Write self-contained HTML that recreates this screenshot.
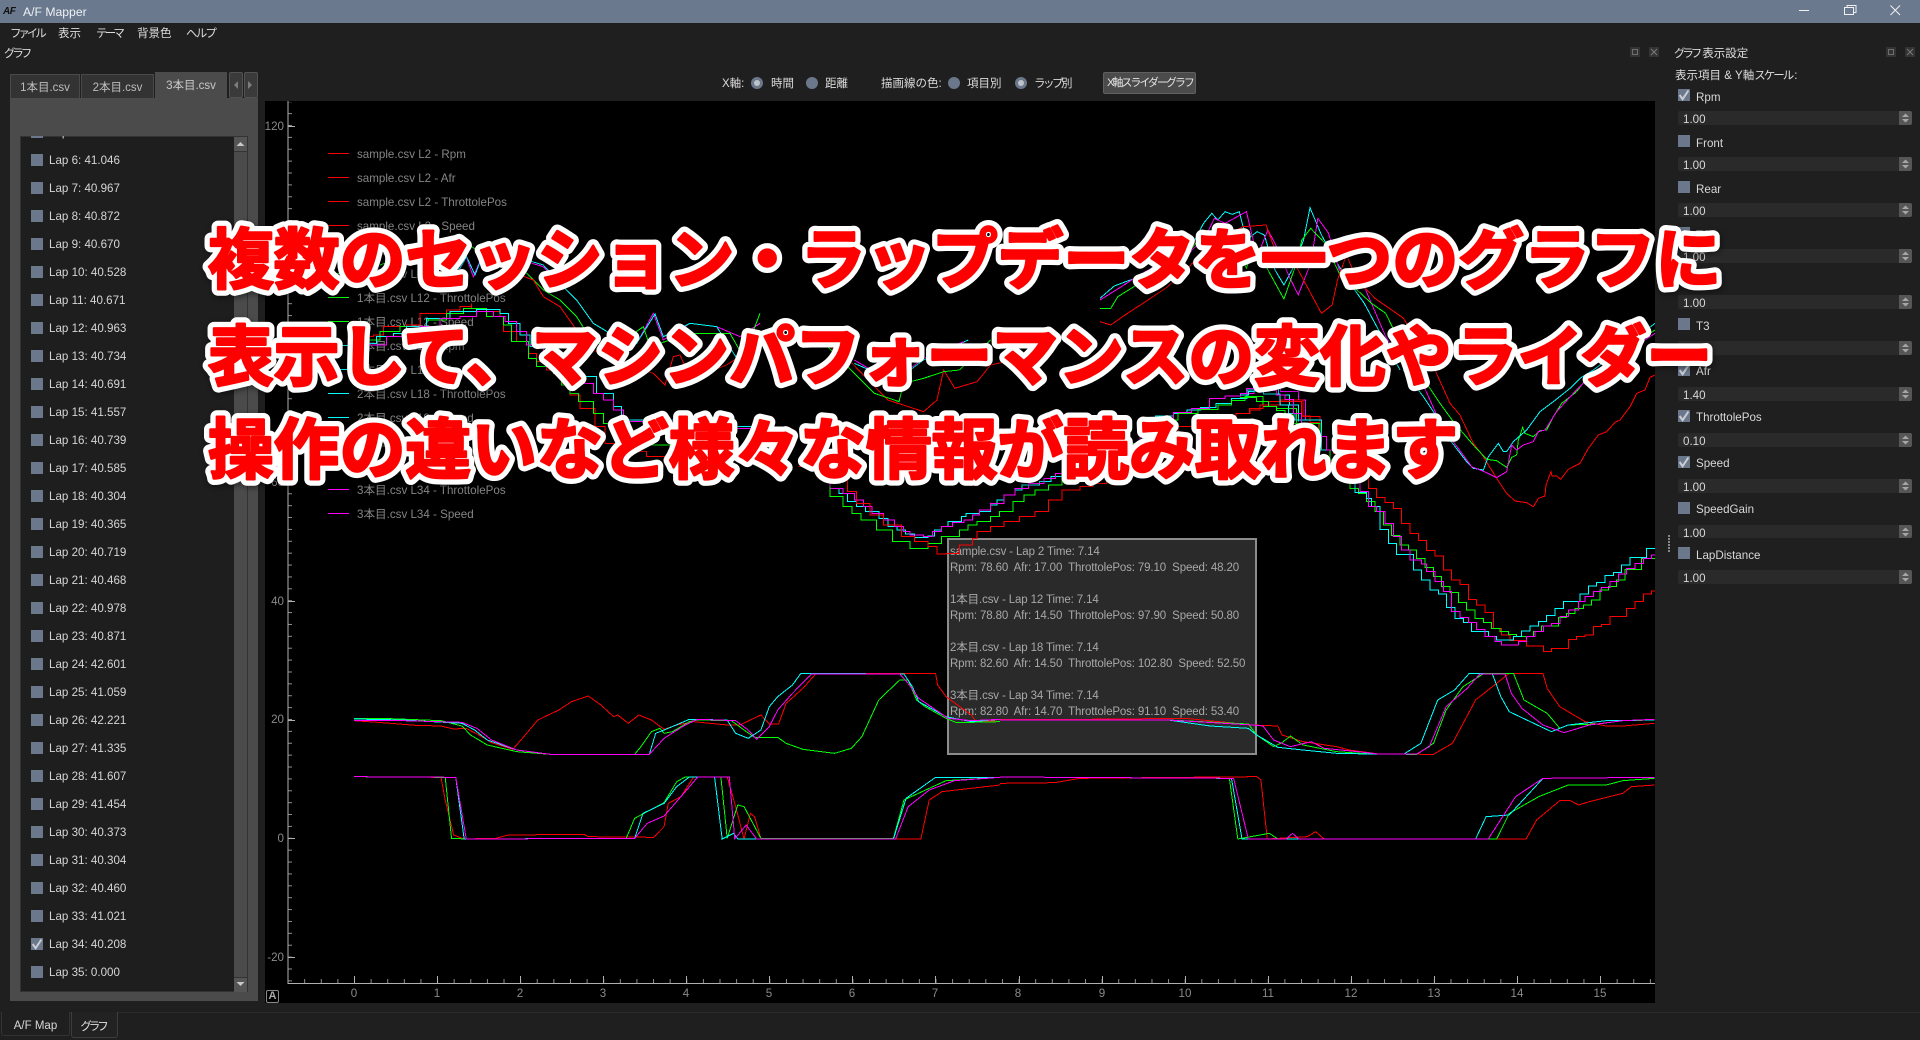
<!DOCTYPE html>
<html lang="ja">
<head>
<meta charset="utf-8">
<title>A/F Mapper</title>
<style>
html,body{margin:0;padding:0;width:1920px;height:1040px;overflow:hidden;background:#1f1f1f}
body{position:relative;font-family:"Liberation Sans","Noto Sans CJK JP",sans-serif;font-size:12px;color:#dcdcdc}
.a{position:absolute;white-space:pre;line-height:16px;margin-top:1px}
.k{letter-spacing:-3.1px}
#title{position:absolute;left:0;top:0;width:1920px;height:23px;background:#6a798e}
.cb{position:absolute;left:11px;width:12px;height:12px;background:#6b788c}
.cb svg{position:absolute;left:0;top:0}
.row{position:relative;height:28px}
.row .cb{top:8px}
.row span{position:absolute;left:29px;top:7px;line-height:16px;font-size:11.6px;color:#d6d6d6}
.tab{position:absolute;box-sizing:border-box;text-align:center;font-size:11.5px;line-height:26px;color:#bdbdbd}
.radio{position:absolute;width:12px;height:12px;border-radius:50%;background:#6b788c;top:77px}
.radio i{position:absolute;left:3px;top:3px;width:6px;height:6px;border-radius:50%;background:#bfc3ca}
.dk{position:absolute;width:10px;height:10px;background:#333;border:0;top:47px}
.dk svg{position:absolute;left:0;top:0}
.rc{position:absolute;left:1678px;width:12px;height:12px;background:#6b788c}
.rc svg{position:absolute;left:0;top:0}
.rl{position:absolute;left:1696px;line-height:16px;font-size:11.6px;color:#d8d8d8;white-space:pre;margin-top:1px}
.sp{position:absolute;left:1678px;width:234px;height:14px;background:#2a2a2a;border-radius:2px;overflow:hidden}
.sp span{position:absolute;left:5px;top:1px;line-height:15px;font-size:11.6px;color:#d8d8d8}
.sp b{position:absolute;left:221px;top:0;width:13px;height:14px;background:#565656}
.sp svg{position:absolute;left:221px;top:0}
#plotclip{position:absolute;left:0;top:0;width:1655px;height:1040px;overflow:hidden}
.lg{position:absolute;left:357px;font-size:11.6px;line-height:16px;color:#858585;white-space:pre;margin-top:1px}
.ll{position:absolute;left:328px;width:21px;height:1px}
.yl{position:absolute;left:250px;width:34px;text-align:right;font-size:11.6px;line-height:16px;color:#8a8a8a;margin-top:1px}
.xl{position:absolute;top:985px;width:30px;text-align:center;font-size:11.6px;line-height:16px;color:#8a8a8a;margin-top:1px}
.tt{position:absolute;left:950px;font-size:11.5px;letter-spacing:-.13px;line-height:16px;color:#a8a8a8;white-space:pre;margin-top:1px}
#traces path,#traces polyline{fill:none;stroke-width:1;vector-effect:non-scaling-stroke}
.r{stroke:#ff0000}.g{stroke:#00ff00}.c{stroke:#00ffff}.m{stroke:#ff00ff}
#big{position:absolute;left:0;top:0;pointer-events:none}
#big text{font-family:"Liberation Sans","Noto Sans CJK JP",sans-serif;font-weight:700;font-size:65.8px;stroke-linejoin:round;stroke-linecap:round}
#big .w{fill:#fff;stroke:#fff;stroke-width:13px}
#big .f{fill:#ff0000;stroke:#ff0000;stroke-width:2.5px}
#big .wg{filter:drop-shadow(1px 2px 3px rgba(0,0,0,.45))}
</style>
</head>
<body>
<svg width="0" height="0" style="position:absolute"><defs>
<symbol id="chk" viewBox="0 0 12 12"><polyline points="1.7,6 4.6,10.2 10.4,1.5" fill="none" stroke="#c9cdd3" stroke-width="2"/></symbol>
<symbol id="spn" viewBox="0 0 13 14"><path d="M6.5 2.5L10 6H3zM6.5 11.5L10 8H3z" fill="#a6a6a6"/></symbol>
<symbol id="dki" viewBox="0 0 10 10"><rect x="2.5" y="2.5" width="5" height="5" fill="none" stroke="#6e6e6e"/></symbol>
<symbol id="dkx" viewBox="0 0 10 10"><path d="M2 2L8 8M8 2L2 8" stroke="#7a7a7a" fill="none"/></symbol>
</defs></svg>

<div id="title"></div>
<div class="a" style="left:3px;top:3px;font-size:10px;font-style:italic;font-weight:bold;color:#111;letter-spacing:-.5px">AF</div>
<div class="a" style="left:23px;top:3px;font-size:12.2px;color:#eef0f3">A/F Mapper</div>
<svg style="position:absolute;left:1790px;top:0" width="130" height="23" fill="none" stroke="#f0f0f0" stroke-width="1">
<path d="M9 10.5H19"/><path d="M54.5 7.5H63.5V14.5H54.5zM57 7.5V5.5H66V12.5H63.5"/><path d="M100.5 5.5L110 15M110 5.5L100.5 15"/></svg>

<div class="a k" style="left:10px;top:25px;font-size:11.5px">ファイル</div>
<div class="a" style="left:58px;top:25px;font-size:11.5px">表示</div>
<div class="a" style="left:96px;top:25px;font-size:11.5px;letter-spacing:-2.8px">テーマ</div>
<div class="a" style="left:137px;top:25px;font-size:11.5px">背景色</div>
<div class="a" style="left:186px;top:25px;font-size:11.5px;letter-spacing:-1.8px">ヘルプ</div>
<div class="a k" style="left:4px;top:45px;font-size:11.5px">グラフ</div>

<div class="dk" style="left:1630px"><svg width="10" height="10"><use href="#dki"/></svg></div>
<div class="dk" style="left:1649px"><svg width="10" height="10"><use href="#dkx"/></svg></div>
<div class="dk" style="left:1886px"><svg width="10" height="10"><use href="#dki"/></svg></div>
<div class="dk" style="left:1905px"><svg width="10" height="10"><use href="#dkx"/></svg></div>

<!-- tabs -->
<div class="tab" style="left:10px;top:74px;width:70px;height:24px;background:#333;border:1px solid #4a4a4a;border-bottom:0">1本目.csv</div>
<div class="tab" style="left:81px;top:74px;width:73px;height:24px;background:#333;border:1px solid #4a4a4a;border-bottom:0">2本目.csv</div>
<div class="tab" style="left:155px;top:72px;width:72px;height:27px;background:#4b4b4b;color:#c8c8c8;line-height:29px">3本目.csv</div>
<div style="position:absolute;left:229px;top:72px;width:14px;height:26px;background:#3a3a3a;box-sizing:border-box;border:1px solid #525252;border-radius:2px"></div>
<div style="position:absolute;left:244px;top:72px;width:14px;height:26px;background:#3a3a3a;box-sizing:border-box;border:1px solid #525252;border-radius:2px"></div>
<svg style="position:absolute;left:229px;top:72px" width="29" height="26"><path d="M5 13L9 9V17zM23 13L19 9V17z" fill="#7d7d7d"/></svg>

<!-- left pane -->
<div style="position:absolute;left:10px;top:98px;width:248px;height:903px;background:#4b4b4b"></div>
<div style="position:absolute;left:20px;top:136px;width:228px;height:856px;background:#1e1e1e;overflow:hidden;box-shadow:inset 0 0 0 1px #333">
<div style="position:absolute;left:0;top:-18px;width:214px">
<div class="row"><div class="cb"></div><span>Lap 5: 41.288</span></div>
<div class="row"><div class="cb"></div><span>Lap 6: 41.046</span></div>
<div class="row"><div class="cb"></div><span>Lap 7: 40.967</span></div>
<div class="row"><div class="cb"></div><span>Lap 8: 40.872</span></div>
<div class="row"><div class="cb"></div><span>Lap 9: 40.670</span></div>
<div class="row"><div class="cb"></div><span>Lap 10: 40.528</span></div>
<div class="row"><div class="cb"></div><span>Lap 11: 40.671</span></div>
<div class="row"><div class="cb"></div><span>Lap 12: 40.963</span></div>
<div class="row"><div class="cb"></div><span>Lap 13: 40.734</span></div>
<div class="row"><div class="cb"></div><span>Lap 14: 40.691</span></div>
<div class="row"><div class="cb"></div><span>Lap 15: 41.557</span></div>
<div class="row"><div class="cb"></div><span>Lap 16: 40.739</span></div>
<div class="row"><div class="cb"></div><span>Lap 17: 40.585</span></div>
<div class="row"><div class="cb"></div><span>Lap 18: 40.304</span></div>
<div class="row"><div class="cb"></div><span>Lap 19: 40.365</span></div>
<div class="row"><div class="cb"></div><span>Lap 20: 40.719</span></div>
<div class="row"><div class="cb"></div><span>Lap 21: 40.468</span></div>
<div class="row"><div class="cb"></div><span>Lap 22: 40.978</span></div>
<div class="row"><div class="cb"></div><span>Lap 23: 40.871</span></div>
<div class="row"><div class="cb"></div><span>Lap 24: 42.601</span></div>
<div class="row"><div class="cb"></div><span>Lap 25: 41.059</span></div>
<div class="row"><div class="cb"></div><span>Lap 26: 42.221</span></div>
<div class="row"><div class="cb"></div><span>Lap 27: 41.335</span></div>
<div class="row"><div class="cb"></div><span>Lap 28: 41.607</span></div>
<div class="row"><div class="cb"></div><span>Lap 29: 41.454</span></div>
<div class="row"><div class="cb"></div><span>Lap 30: 40.373</span></div>
<div class="row"><div class="cb"></div><span>Lap 31: 40.304</span></div>
<div class="row"><div class="cb"></div><span>Lap 32: 40.460</span></div>
<div class="row"><div class="cb"></div><span>Lap 33: 41.021</span></div>
<div class="row"><div class="cb"><svg width="12" height="12"><use href="#chk"/></svg></div><span>Lap 34: 40.208</span></div>
<div class="row"><div class="cb"></div><span>Lap 35: 0.000</span></div>
</div>
<div style="position:absolute;left:214px;top:1px;width:13px;height:854px;background:#4b4b4b"></div>
<div style="position:absolute;left:214px;top:1px;width:13px;height:14px;background:#555;border-bottom:1px solid #333"></div>
<div style="position:absolute;left:214px;top:841px;width:13px;height:14px;background:#555;border-top:1px solid #333"></div>
<svg style="position:absolute;left:214px;top:1px" width="13" height="854"><path d="M6.5 5L10.5 9H2.5zM6.5 849L10.5 845H2.5z" fill="#c8c8c8"/></svg>
</div>

<!-- top control bar -->
<div class="a" style="left:722px;top:75px;font-size:11.5px">X軸:</div>
<div class="radio" style="left:751px"><i></i></div>
<div class="a" style="left:771px;top:75px;font-size:11.5px">時間</div>
<div class="radio" style="left:806px"></div>
<div class="a" style="left:825px;top:75px;font-size:11.5px">距離</div>
<div class="a" style="left:881px;top:75px;font-size:11.5px">描画線の色:</div>
<div class="radio" style="left:948px"></div>
<div class="a" style="left:967px;top:75px;font-size:11.5px">項目別</div>
<div class="radio" style="left:1015px"><i></i></div>
<div class="a" style="left:1034px;top:75px;font-size:11.5px;letter-spacing:-2.5px">ラップ別</div>
<div style="position:absolute;left:1103px;top:72px;width:93px;height:22px;box-sizing:border-box;background:#4b4b4b;border:1px solid #606060;border-radius:2px;color:#e4e4e4;font-size:11px;line-height:21px;white-space:pre;letter-spacing:-2px;padding-left:3px;overflow:hidden">X軸スライダーグラフ</div>

<!-- plot -->
<div id="plotclip">
<div style="position:absolute;left:265px;top:101px;width:1390px;height:902px;background:#000"></div>
<svg style="position:absolute;left:0;top:0" width="1655" height="1040" shape-rendering="crispEdges">
<defs>
<pattern id="ym" x="288" y="6.2" width="10" height="11.88" patternUnits="userSpaceOnUse"><rect x="0" y="0" width="4" height="1" fill="#8f8f8f"/></pattern>
<pattern id="xm" x="354" y="979" width="16.614" height="5" patternUnits="userSpaceOnUse"><rect x="0" y="0" width="1" height="4" fill="#8f8f8f"/></pattern>
</defs>
<rect x="288" y="102" width="4" height="881" fill="url(#ym)"/>
<rect x="288" y="979" width="1367" height="4" fill="url(#xm)"/>
<path d="M288 101V983.5H1655" fill="none" stroke="#b0b0b0"/>
<path d="M288 126.5H295M288 245.5H295M288 363.5H295M288 482.5H295M288 601.5H295M288 720.5H295M288 838.5H295M288 957.5H295" stroke="#b0b0b0" fill="none"/>
<path d="M354.5 983V976M437.5 983V976M520.5 983V976M603.5 983V976M686.5 983V976M769.5 983V976M852.5 983V976M935.5 983V976M1019.5 983V976M1102.5 983V976M1185.5 983V976M1268.5 983V976M1351.5 983V976M1434.5 983V976M1517.5 983V976M1600.5 983V976" stroke="#b0b0b0" fill="none"/>
</svg>
<div class="yl" style="top:118px">120</div>
<div class="yl" style="top:236px">100</div>
<div class="yl" style="top:355px">80</div>
<div class="yl" style="top:474px">60</div>
<div class="yl" style="top:593px">40</div>
<div class="yl" style="top:711px">20</div>
<div class="yl" style="top:830px">0</div>
<div class="yl" style="top:949px">-20</div>
<div class="xl" style="left:339px">0</div><div class="xl" style="left:422px">1</div><div class="xl" style="left:505px">2</div><div class="xl" style="left:588px">3</div><div class="xl" style="left:671px">4</div><div class="xl" style="left:754px">5</div><div class="xl" style="left:837px">6</div><div class="xl" style="left:920px">7</div><div class="xl" style="left:1003px">8</div><div class="xl" style="left:1087px">9</div><div class="xl" style="left:1170px">10</div><div class="xl" style="left:1253px">11</div><div class="xl" style="left:1336px">12</div><div class="xl" style="left:1419px">13</div><div class="xl" style="left:1502px">14</div><div class="xl" style="left:1585px">15</div>

<div style="position:absolute;left:266px;top:990px;width:13px;height:13px;box-sizing:border-box;border:1px solid #8a8a8a;border-radius:2px;font-size:11px;font-weight:bold;line-height:11px;text-align:center;color:#aaa">A</div>

<!-- legend -->
<div class="ll" style="top:153px;background:#f00"></div><div class="lg" style="top:146px">sample.csv L2 - Rpm</div>
<div class="ll" style="top:177px;background:#f00"></div><div class="lg" style="top:170px">sample.csv L2 - Afr</div>
<div class="ll" style="top:201px;background:#f00"></div><div class="lg" style="top:194px">sample.csv L2 - ThrottolePos</div>
<div class="ll" style="top:225px;background:#f00"></div><div class="lg" style="top:218px">sample.csv L2 - Speed</div>
<div class="ll" style="top:249px;background:#0f0"></div><div class="lg" style="top:242px">1本目.csv L12 - Rpm</div>
<div class="ll" style="top:273px;background:#0f0"></div><div class="lg" style="top:266px">1本目.csv L12 - Afr</div>
<div class="ll" style="top:297px;background:#0f0"></div><div class="lg" style="top:290px">1本目.csv L12 - ThrottolePos</div>
<div class="ll" style="top:321px;background:#0f0"></div><div class="lg" style="top:314px">1本目.csv L12 - Speed</div>
<div class="ll" style="top:345px;background:#0ff"></div><div class="lg" style="top:338px">2本目.csv L18 - Rpm</div>
<div class="ll" style="top:369px;background:#0ff"></div><div class="lg" style="top:362px">2本目.csv L18 - Afr</div>
<div class="ll" style="top:393px;background:#0ff"></div><div class="lg" style="top:386px">2本目.csv L18 - ThrottolePos</div>
<div class="ll" style="top:417px;background:#0ff"></div><div class="lg" style="top:410px">2本目.csv L18 - Speed</div>
<div class="ll" style="top:441px;background:#f0f"></div><div class="lg" style="top:434px">3本目.csv L34 - Rpm</div>
<div class="ll" style="top:465px;background:#f0f"></div><div class="lg" style="top:458px">3本目.csv L34 - Afr</div>
<div class="ll" style="top:489px;background:#f0f"></div><div class="lg" style="top:482px">3本目.csv L34 - ThrottolePos</div>
<div class="ll" style="top:513px;background:#f0f"></div><div class="lg" style="top:506px">3本目.csv L34 - Speed</div>

<!-- tooltip -->
<div style="position:absolute;left:947px;top:538px;width:310px;height:217px;box-sizing:border-box;background:#2a2a2a;border:2px solid #8c8c8c"></div>
<div class="tt" style="top:543px">sample.csv - Lap 2 Time: 7.14</div>
<div class="tt" style="top:559px">Rpm: 78.60  Afr: 17.00  ThrottolePos: 79.10  Speed: 48.20</div>
<div class="tt" style="top:591px">1本目.csv - Lap 12 Time: 7.14</div>
<div class="tt" style="top:607px">Rpm: 78.80  Afr: 14.50  ThrottolePos: 97.90  Speed: 50.80</div>
<div class="tt" style="top:639px">2本目.csv - Lap 18 Time: 7.14</div>
<div class="tt" style="top:655px">Rpm: 82.60  Afr: 14.50  ThrottolePos: 102.80  Speed: 52.50</div>
<div class="tt" style="top:687px">3本目.csv - Lap 34 Time: 7.14</div>
<div class="tt" style="top:703px">Rpm: 82.80  Afr: 14.70  ThrottolePos: 91.10  Speed: 53.40</div>

<!-- traces -->
<svg id="traces" style="position:absolute;left:0;top:0" width="1655" height="1040" shape-rendering="crispEdges">
<g transform="translate(340,650) scale(.42088,.33333)">
<polyline class="r" points="33,212 100,218 180,226 240,228 270,237 300,235 330,255 360,278 410,298 430,270 470,210 520,180 550,155 590,138 620,165 650,200 660,195 685,220 710,195 740,210 770,238 800,225 840,215 880,220 920,225 950,225 1000,195 1020,222 1042,222 1060,160 1100,115 1130,72 1415,70 1420,105 1440,140 1500,195 1510,212 1568,214"/>
<polyline class="g" points="33,205 100,205 240,212 290,228 310,255 350,285 420,305 500,313 700,313 715,290 740,245 760,235 770,250 790,245 830,215 850,210 930,212 960,240 985,262 1040,262 1060,280 1100,298 1175,310 1215,295 1240,260 1280,150 1330,90 1350,90 1370,150 1390,170 1440,205 1465,218 1568,215"/>
<polyline class="c" points="33,207 150,210 290,220 320,240 350,270 420,300 500,313 735,313 750,250 780,235 830,208 920,210 940,250 970,265 1000,240 1020,170 1040,140 1075,105 1095,70 1340,72 1360,110 1375,155 1440,200 1500,215 1568,208"/>
<polyline class="m" points="33,212 150,212 290,217 325,235 360,270 420,300 500,313 735,313 770,265 820,225 850,208 940,212 970,240 990,268 1020,230 1040,180 1075,130 1110,85 1120,72 1330,72 1350,100 1375,145 1445,205 1500,212 1568,208"/>
<polyline class="r" points="33,380 240,382 250,450 270,555 295,567 370,565 400,555 580,553 590,560 745,562 770,530 780,460 810,440 840,381 920,381 940,470 960,567 975,490 985,500 1000,565 1380,567 1400,450 1430,425 1568,405"/>
<polyline class="g" points="33,380 250,382 265,565 300,567 680,565 700,505 770,458 800,395 820,381 905,381 920,565 945,465 960,470 1000,565 1315,565 1340,450 1400,415 1440,392 1568,382"/>
<polyline class="c" points="33,380 275,382 295,567 700,565 720,490 770,460 800,410 830,381 890,381 908,567 935,550 945,567 1315,567 1345,445 1415,382 1568,382"/>
<polyline class="m" points="33,380 275,382 300,567 700,565 730,520 770,498 810,440 850,381 925,381 938,567 965,525 990,567 1320,567 1350,470 1400,420 1460,392 1568,382"/>
</g>
<g transform="translate(1000,650) scale(.42088,.33333)">
<polyline class="r" points="0,208 200,208 440,205 600,225 660,228 670,255 720,275 800,290 830,300 900,312 1030,313 1075,280 1130,150 1190,90 1210,70 1290,70 1300,115 1330,170 1390,215 1440,228 1480,228 1555,220"/>
<polyline class="g" points="0,210 400,210 590,222 610,255 650,290 670,278 690,258 720,285 800,305 880,312 990,313 1030,280 1060,180 1100,110 1150,70 1220,70 1245,150 1300,190 1330,235 1350,225 1420,222 1480,212 1555,210"/>
<polyline class="c" points="0,210 400,210 500,228 590,235 610,255 660,292 720,300 800,310 880,312 960,312 1000,280 1040,150 1080,120 1115,70 1170,72 1190,140 1210,185 1260,215 1310,245 1350,225 1440,212 1555,210"/>
<polyline class="m" points="0,210 400,210 600,225 625,228 650,270 690,290 740,275 770,295 850,305 900,312 990,312 1020,290 1060,170 1110,115 1140,72 1200,72 1215,130 1240,175 1290,225 1340,248 1400,225 1480,212 1555,208"/>
<polyline class="r" points="0,400 130,398 190,385 610,380 620,390 635,567 730,560 750,545 770,567 1250,567 1275,510 1330,452 1355,452 1375,465 1400,455 1480,430 1500,410 1555,405"/>
<polyline class="g" points="0,381 545,385 565,567 640,550 660,567 1180,567 1210,490 1280,440 1350,405 1440,405 1480,392 1555,385"/>
<polyline class="c" points="0,381 550,385 575,567 1130,567 1155,500 1210,495 1250,440 1290,385 1555,382"/>
<polyline class="m" points="0,381 555,385 590,567 680,567 695,550 710,567 1160,567 1225,440 1290,385 1555,382"/>
</g>
<g transform="translate(260,110) scale(.33333)">
<path class="r" d="M290 680H340V675H370V650H440V645H480V610H560V600H600V590H635V580V595H680V605H720V620H730V665H770V695H805V730H830V755H860V780H905V820H930V855H960V895H1005V950H1035V1000H1100V1025H1160V1040H1215V1060H1240V1080H1300V1100"/>
<path class="g" d="M310 690H360V665H420V650H500V630H560V610H610V595H680V620H730V645H755V695H805V745H830V770H880V790H905V825H930V850H955V875H1000V910H1030V940H1085V965H1135V1005H1230V1010"/>
<path class="c" d="M320 700H350V680H400V670H440V650H500V625H570V605H650V598H720V610H745V640H780V675H810V710H860V745H910V770H950V800H1010V850H1060V890H1085V930H1250V940H1400V950H1500"/>
<path class="m" d="M320 705H380V680H430V665H480V650H540V625H600V620H650V605H700V620H735V635H770V665H800V705H850V740H890V760H910V795H960V820H1000V850H1030V870H1060V900H1090V935H1250V955H1500"/>
<polyline class="m" points="380,460 460,440 560,470 600,470 615,430 640,500 670,430 700,450 800,455 850,470 900,520 950,570 1000,640 1050,670 1130,700 1180,610 1210,690 1290,640 1370,650 1440,680 1500,640"/>
<polyline class="c" points="380,465 460,445 560,475 600,475 620,440 645,495 670,430 700,450 800,450 850,465 900,520 950,570 1000,640 1050,670 1130,700 1185,612 1210,680 1290,640 1370,650 1440,760"/>
<polyline class="g" points="360,465 430,440 590,480 620,400 650,420 800,490 850,540 900,570 950,620 1000,700 1080,700 1150,650 1170,710 1290,670 1410,670 1450,740 1500,610"/>
<polyline class="r" points="780,495 820,510 850,560 900,590 950,660 1000,720 1050,750 1180,790 1215,825 1240,740 1260,735 1285,790 1310,800 1400,765 1500,700"/>
</g>
<g transform="translate(620,330) scale(.44643,.33333)">
<polyline class="r" points="450,30 520,100 600,210 680,245 710,210 725,120 750,175 800,155 830,105 900,85 960,40"/>
<polyline class="g" points="450,30 510,110 570,190 625,215 635,160 680,145 725,125 760,120 830,30"/>
<polyline class="c" points="525,100 610,150 650,120 680,90 780,30"/>
<polyline class="m" points="525,90 600,150 650,115 680,85 770,35"/>
<path class="c" d="M470 460V475H490V490H510V515H530V530H550V545H580V565H600V590H620V600H640V612H660V622H690V618H705V600H720V590H735V575H765V560H775V550H805V545H830V525H845V510H860V495H885V480H900V465H940V455H965V440H990V420H1020V405H1050V390H1080V375H1110V360H1140V340H1170V300H1200V258H1240V250H1270V240H1300V232H1335V220H1370V205H1405V180H1440V175H1475V195H1500V225H1520V275"/>
<path class="m" d="M470 450V475H500V490H525V510H545V530H565V550H590V570H615V590H635V605H650V615H680V620H700V605H720V590H745V578H770V570H790V555H805V540H830V520H860V495H885V475H915V460H950V445H975V430H995V415H1030V400H1060V385H1100V365H1130V340H1165V310H1200V270H1240V248H1280V235H1320V205H1355V198H1390V190H1420V170H1445V168H1480V185H1520V210H1535V270"/>
<path class="g" d="M470 470V500H500V530H520V550H540V570H575V600H610V635H650V655H690V640H720V620H760V600H780V585H800V575H830V560H850V545H880V515H905V495H930V480H960V465H990V440H1030V425H1060V420H1100V380H1140V340H1170V300H1205V270H1250V250H1295V238H1340V225H1370V212H1400V200H1440V230H1470V235H1515V290"/>
<path class="r" d="M400 410H450V430H490V450H510V485H530V520H560V555H590V585H630V620H660V635H690V650H710V672H730V670H760V645H790V625H800V605H830V590H860V575H895V560H930V545H960V510H990V480H1030V470H1060V460H1090V430H1120V400H1150V375H1180V350H1215V320H1250V290H1300V275H1340V262H1380V250H1410V235H1440V225H1480V210H1530V260H1568V285"/>
</g>
<g transform="translate(1100,180) scale(.35714,.33333)">
<polyline class="c" points="0,355 40,318 110,290 170,245 240,215 260,190 290,130 313,100 330,120 350,95 370,103 390,95 410,180 440,155 460,165 490,270 515,315 540,265 570,180 588,83 620,165 670,260 700,310 740,370 800,490 840,570"/>
<polyline class="m" points="0,360 60,320 110,285 170,250 250,220 300,160 320,115 350,130 410,95 440,230 470,150 490,190 530,290 555,345 590,250 610,115 640,160 670,270 740,320 800,470 860,570 900,615"/>
<polyline class="g" points="0,385 30,385 50,350 110,310 170,255 250,215 290,160 370,160 410,265 430,200 460,250 515,357 550,250 565,180 590,145 630,190 670,280 760,370 800,400 850,510 920,610"/>
<polyline class="r" points="0,425 30,435 70,405 120,370 190,320 250,260 300,200 400,140 465,135 500,240 550,260 580,320 620,400 650,375 665,300 690,225 720,300 770,355 850,415 930,560"/>
</g>
<g transform="translate(1240,370) scale(.33333)">
<path class="r" d="M0 130H30V120H60V105H85V95H185V138H210V158H235V200H260V240H280V250H330V300H385V355H410V382H435V398H460V415H485V460H510V490H535V512H560V542H585V558H610V600H635V630H660V643H685V688H710V705H735V728H760V775H785V795H810V812H860V828H910V845H935V835H985V808H1010V800H1035V795H1060V770H1085V763H1110V740H1160V715H1185V695H1210V672H1235V663H1245"/>
<path class="g" d="M0 82H50V95H85V110H110V122H135V135H160V160H240V240H270V270H330V355H355V370H380V395H405V425H430V465H455V497H480V525H505V540H530V565H555V592H580V620H605V650H630V667H655V697H680V720H705V745H730V757H755V775H780V785H805V793H830V800H880V785H905V768H955V742H980V730H1005V715H1030V705H1055V690H1080V660H1105V650H1130V630H1155V598H1205V565H1245"/>
<path class="c" d="M0 75H25V65H45V58H70V72H120V105H145V130H165V150H245V240H345V368H380V385H395V410H420V478H445V520H470V553H520V600H545V630H570V660H595V672H620V712H645V745H670V757H695V785H745V800H770V810H820V800H845V783H870V768H895V755H920V737H945V715H970V695H1020V672H1045V648H1070V638H1095V617H1120V608H1145V585H1170V562H1220V535H1245"/>
<path class="m" d="M0 70H20V55H40V50H85V62H110V75H135V88H160V130H185V200H260V240H345V338H360V365H385V410H410V425H435V460H460V500H485V540H510V570H545V582H560V605H585V635H610V665H635V725H660V742H685V758H710V778H735V800H765V815H785V825H835V815H860V800H885V785H910V768H935V760H960V740H985V720H1015V695H1035V680H1060V665H1085V652H1110V635H1135V612H1160V595H1185V580H1210V565H1235V555H1245"/>
<polyline class="r" points="585,0 630,100 660,135 700,220 730,260 770,325 800,370 825,393 860,398 880,410 895,385 915,378 918,345 933,305 936,318 950,318 962,328 985,298 1020,280 1045,235 1075,195 1100,185 1125,157 1140,150 1170,110 1190,70 1215,60 1230,22 1245,15"/>
<polyline class="g" points="560,40 600,100 640,155 700,225 740,268 770,272 800,292 815,262 830,255 835,210 848,172 855,190 880,200 900,182 920,180 940,140 965,100 1010,65 1040,25 1075,5 1100,-20 1245,-120"/>
<polyline class="c" points="490,0 550,80 590,140 630,210 680,275 700,295 730,300 745,260 775,220 790,245 800,245 820,215 860,180 900,125 940,95 990,55 1020,25 1060,0 1245,-140"/>
<polyline class="m" points="550,45 590,135 640,215 695,290 740,308 770,323 800,305 815,225 830,240 850,225 880,215 895,185 915,180 950,125 1000,70 1040,30 1080,5 1110,-20 1245,-110"/>
</g>
</svg>
</div>

<div style="position:absolute;left:1668px;top:535px;width:2px;height:18px;background:repeating-linear-gradient(#888 0 2px,transparent 2px 3px)"></div>

<!-- right panel -->
<div class="a" style="left:1674px;top:45px;font-size:11.5px"><span class="k">グラフ</span><span style="margin-left:3px">表示設定</span></div>
<div class="a" style="left:1675px;top:67px;font-size:11.5px">表示項目 &amp; Y軸<span style="letter-spacing:-2px">スケール</span><span style="margin-left:2px">:</span></div>

<div class="rc" style="top:89px"><svg width="12" height="12"><use href="#chk"/></svg></div><div class="rl" style="top:89px">Rpm</div>
<div class="sp" style="top:111px"><span>1.00</span><b></b><svg width="13" height="14"><use href="#spn"/></svg></div>
<div class="rc" style="top:135px"></div><div class="rl" style="top:135px">Front</div>
<div class="sp" style="top:157px"><span>1.00</span><b></b><svg width="13" height="14"><use href="#spn"/></svg></div>
<div class="rc" style="top:181px"></div><div class="rl" style="top:181px">Rear</div>
<div class="sp" style="top:203px"><span>1.00</span><b></b><svg width="13" height="14"><use href="#spn"/></svg></div>
<div class="rc" style="top:227px"></div><div class="rl" style="top:227px">T1</div>
<div class="sp" style="top:249px"><span>1.00</span><b></b><svg width="13" height="14"><use href="#spn"/></svg></div>
<div class="rc" style="top:273px"></div><div class="rl" style="top:273px">T2</div>
<div class="sp" style="top:295px"><span>1.00</span><b></b><svg width="13" height="14"><use href="#spn"/></svg></div>
<div class="rc" style="top:318px"></div><div class="rl" style="top:318px">T3</div>
<div class="sp" style="top:341px"><span>1.00</span><b></b><svg width="13" height="14"><use href="#spn"/></svg></div>
<div class="rc" style="top:364px"><svg width="12" height="12"><use href="#chk"/></svg></div><div class="rl" style="top:363px">Afr</div>
<div class="sp" style="top:387px"><span>1.40</span><b></b><svg width="13" height="14"><use href="#spn"/></svg></div>
<div class="rc" style="top:410px"><svg width="12" height="12"><use href="#chk"/></svg></div><div class="rl" style="top:409px">ThrottolePos</div>
<div class="sp" style="top:433px"><span>0.10</span><b></b><svg width="13" height="14"><use href="#spn"/></svg></div>
<div class="rc" style="top:456px"><svg width="12" height="12"><use href="#chk"/></svg></div><div class="rl" style="top:455px">Speed</div>
<div class="sp" style="top:479px"><span>1.00</span><b></b><svg width="13" height="14"><use href="#spn"/></svg></div>
<div class="rc" style="top:502px"></div><div class="rl" style="top:501px">SpeedGain</div>
<div class="sp" style="top:525px;height:13px"><span>1.00</span><b></b><svg width="13" height="14"><use href="#spn"/></svg></div>
<div class="rc" style="top:547px"></div><div class="rl" style="top:547px">LapDistance</div>
<div class="sp" style="top:570px"><span>1.00</span><b></b><svg width="13" height="14"><use href="#spn"/></svg></div>

<!-- bottom tabs -->
<div style="position:absolute;left:0;top:1012px;width:1920px;height:1px;background:#2a2a2a"></div>
<div class="tab" style="left:1px;top:1012px;width:69px;height:24px;border:1px solid #333;border-top:0;border-radius:0 0 3px 3px;color:#d8d8d8;background:#1f1f1f;line-height:28px">A/F Map</div>
<div class="tab" style="left:71px;top:1012px;width:47px;height:26px;border:1px solid #3d3d3d;border-top:0;border-radius:0 0 3px 3px;color:#e0e0e0;background:#222;line-height:30px;letter-spacing:-3.1px;padding-right:3px">グラフ</div>

<!-- overlay text -->
<svg id="big" width="1920" height="1040">
<g class="wg">
<text class="w" x="208" y="283">複数のセッション・ラップデータを一つのグラフに</text>
<text class="w" x="208" y="380">表示して、マシンパフォーマンスの変化やライダー</text>
<text class="w" x="208" y="473">操作の違いなど様々な情報が読み取れます</text>
</g>
<text class="f" x="208" y="283">複数のセッション・ラップデータを一つのグラフに</text>
<text class="f" x="208" y="380">表示して、マシンパフォーマンスの変化やライダー</text>
<text class="f" x="208" y="473">操作の違いなど様々な情報が読み取れます</text>
</svg>
</body>
</html>
